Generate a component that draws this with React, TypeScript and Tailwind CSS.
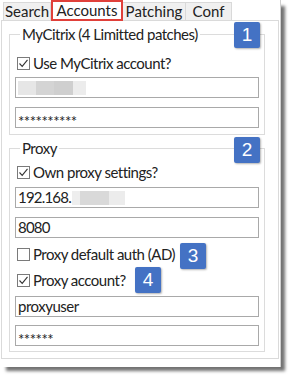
import type { ReactNode } from "react";

const font = { fontFamily: "Lato, 'DejaVu Sans', sans-serif" };

function Badge({ n, className }: { n: string; className: string }) {
  return (
    <div
      className={`absolute w-[26px] h-[26px] bg-[#4472c4] rounded-[2px] text-white text-[19px] leading-[26px] text-center shadow-[1px_1px_2px_rgba(0,0,0,0.3)] ${className}`}
      style={{ fontFamily: "'Liberation Sans', Arial, sans-serif" }}
    >
      {n}
    </div>
  );
}

function Check({ checked, label, className = "" }: { checked: boolean; label: string; className?: string }) {
  return (
    <div className={`flex items-center h-4 pl-[2px] ${className}`}>
      <div className="w-[13px] h-[13px] border border-[#7a7a7a] bg-white flex items-center justify-center">
        {checked && (
          <svg width="11" height="11" viewBox="0 0 11 11">
            <path d="M1.5 5.5 L4.2 8.3 L9.5 1.8" fill="none" stroke="#333" strokeWidth="1.1" />
          </svg>
        )}
      </div>
      <span className="ml-[3px] text-[15px] tracking-[-0.5px] text-[#222] leading-4">{label}</span>
    </div>
  );
}

function Field({ children, className = "" }: { children?: ReactNode; className?: string }) {
  return (
    <div className={`w-[244px] h-[21px] border border-[#a9a9a9] bg-white flex items-center pl-[2px] text-[15px] text-[#222] ${className}`}>
      {children}
    </div>
  );
}

function Group({ title, children, className = "" }: { title: string; children: ReactNode; className?: string }) {
  return (
    <fieldset className={`w-[256px] border border-[#dcdcdc] ml-[7px] pl-[5px] ${className}`}>
      <legend className="ml-[5px] px-[2px] text-[15px] tracking-[-0.5px] leading-4 text-[#222]">{title}</legend>
      {children}
    </fieldset>
  );
}

export default function App() {
  return (
    <div className="w-[300px] h-[380px] bg-white relative overflow-hidden" style={font}>
      <div className="w-[281px] h-[367px] bg-white border-r border-[#cfcfcf] shadow-[5px_5px_3px_-1px_rgba(0,0,0,0.55)] relative">
        {/* tab strip */}
        <div className="flex h-[20px] pl-[3px] items-end text-[15px] text-[#222]">
          <div className="h-[18px] w-[48px] bg-[#f0f0f0] border border-b-0 border-[#d9d9d9] flex items-center justify-center">Search</div>
          <div className="h-[21px] w-[72px] bg-white border-2 border-[#e0403a] flex items-center justify-center relative z-10 -mb-px">Accounts</div>
          <div className="h-[18px] w-[63px] bg-[#f0f0f0] border border-b-0 border-l-0 border-[#d9d9d9] flex items-center justify-center">Patching</div>
          <div className="h-[18px] w-[46px] bg-[#f0f0f0] border border-b-0 border-l-0 border-[#d9d9d9] flex items-center justify-center">Conf</div>
        </div>
        {/* tab page */}
        <div className="ml-px w-[278px] h-[339px] border border-[#dadada] bg-white pt-[5px]">
          <Group title="MyCitrix (4 Limitted patches)" className="pb-[6px]">
            <Check checked label="Use MyCitrix account?" className="mt-[13px]" />
            <Field className="mt-[6px]">
              <div className="flex h-[14px]">
                <div className="w-[18px] bg-[#e6e6e6]" />
                <div className="w-[18px] bg-[#d4d4d4]" />
                <div className="w-[19px] bg-[#cfcfcf]" />
                <div className="w-[13px] bg-[#ececec]" />
              </div>
            </Field>
            <Field className="mt-[9px] items-start pt-[2px] text-[11px] tracking-[-0.5px]">**********</Field>
          </Group>
          <Group title="Proxy" className="mt-[5px] pb-[5px]">
            <Check checked label="Own proxy settings?" className="mt-[8px]" />
            <Field className="mt-[7px] tracking-[-0.8px]">
              192.168.
              <div className="flex h-[14px] ml-px">
                <div className="w-[8px] bg-[#eeeeee]" />
                <div className="w-[29px] bg-[#d9d9d9]" />
                <div className="w-[16px] bg-[#ececec]" />
              </div>
            </Field>
            <Field className="mt-[9px] tracking-[-0.8px]">8080</Field>
            <Check checked={false} label="Proxy default auth (AD)" className="mt-[8px]" />
            <Check checked label="Proxy account?" className="mt-[10px]" />
            <Field className="mt-[8px] tracking-[-0.5px]">proxyuser</Field>
            <Field className="mt-[8px] items-start pt-[2px] text-[11px] tracking-[-0.5px]">******</Field>
          </Group>
        </div>
        <Badge n="1" className="left-[234px] top-[22px]" />
        <Badge n="2" className="left-[234px] top-[137px]" />
        <Badge n="3" className="left-[180px] top-[243px]" />
        <Badge n="4" className="left-[135px] top-[267px]" />
      </div>
    </div>
  );
}
